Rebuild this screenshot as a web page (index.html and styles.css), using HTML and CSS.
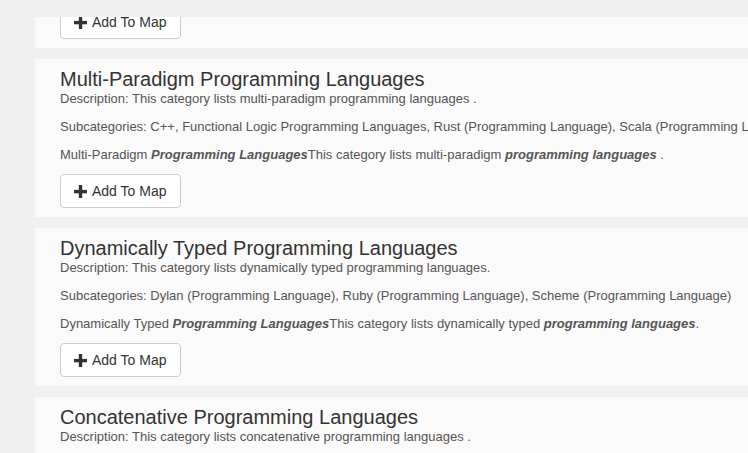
FILE: index.html
```html
<!DOCTYPE html>
<html>
<head>
<meta charset="utf-8">
<link rel="stylesheet" href="styles.css">
</head>
<body>
<div class="viewport">
  <div class="list">
    <div class="card">
      <h3 class="title">Functional Programming Languages</h3>
      <p>Description: This category lists functional programming languages .</p>
      <p>Subcategories: Haskell (Programming Language), OCaml (Programming Language)</p>
      <p>Functional <b><i>Programming Languages</i></b>This category lists functional <b><i>programming languages</i></b> .</p>
      <button class="btn"><svg class="plus" viewBox="0 0 13 13"><rect x="0" y="4.9" width="13" height="3.4"/><rect x="4.8" y="0" width="3.4" height="13"/></svg>Add To Map</button>
    </div>
    <div class="card">
      <h3 class="title">Multi-Paradigm Programming Languages</h3>
      <p>Description: This category lists multi-paradigm programming languages .</p>
      <p>Subcategories: C++, Functional Logic Programming Languages, Rust (Programming Language), Scala (Programming Language)</p>
      <p>Multi-Paradigm <b><i>Programming Languages</i></b>This category lists multi-paradigm <b><i>programming languages</i></b> .</p>
      <button class="btn"><svg class="plus" viewBox="0 0 13 13"><rect x="0" y="4.9" width="13" height="3.4"/><rect x="4.8" y="0" width="3.4" height="13"/></svg>Add To Map</button>
    </div>
    <div class="card">
      <h3 class="title">Dynamically Typed Programming Languages</h3>
      <p>Description: This category lists dynamically typed programming languages.</p>
      <p>Subcategories: Dylan (Programming Language), Ruby (Programming Language), Scheme (Programming Language)</p>
      <p>Dynamically Typed <b><i>Programming Languages</i></b>This category lists dynamically typed <b><i>programming languages</i></b>.</p>
      <button class="btn"><svg class="plus" viewBox="0 0 13 13"><rect x="0" y="4.9" width="13" height="3.4"/><rect x="4.8" y="0" width="3.4" height="13"/></svg>Add To Map</button>
    </div>
    <div class="card">
      <h3 class="title">Concatenative Programming Languages</h3>
      <p>Description: This category lists concatenative programming languages .</p>
      <p>Subcategories: Factor (Programming Language), Forth (Programming Language)</p>
      <p>Concatenative <b><i>Programming Languages</i></b>This category lists concatenative <b><i>programming languages</i></b> .</p>
      <button class="btn"><svg class="plus" viewBox="0 0 13 13"><rect x="0" y="4.9" width="13" height="3.4"/><rect x="4.8" y="0" width="3.4" height="13"/></svg>Add To Map</button>
    </div>
  </div>
</div>
</body>
</html>
```
FILE: styles.css
```css
html, body {
  margin: 0;
  padding: 0;
  background: #f0f0f0;
  overflow: hidden;
  font-family: "Liberation Sans", Arial, sans-serif;
  color: #555;
}
.viewport {
  margin-top: 17px;
  height: 436px;
  overflow: hidden;
}
.list {
  margin-top: -127px;
  padding-left: 35px;
  width: 900px;
}
.card {
  background: #fafafa;
  padding: 10px 25px 9px;
  margin-bottom: 11px;
  white-space: nowrap;
}
.title {
  margin: 0;
  font-size: 20px;
  line-height: 21px;
  font-weight: normal;
  color: #333;
}
.card p {
  margin: 0 0 10px;
  font-size: 13px;
  line-height: 18px;
}
.btn {
  display: flex;
  align-items: center;
  gap: 5px;
  height: 34px;
  padding: 6px 14px 6px 13px;
  font-family: "Liberation Sans", Arial, sans-serif;
  font-size: 14px;
  line-height: 20px;
  color: #333;
  background: #fff;
  border: 1px solid #ccc;
  border-radius: 4px;
}
.plus {
  width: 13px;
  height: 13px;
  fill: #333;
}
```
